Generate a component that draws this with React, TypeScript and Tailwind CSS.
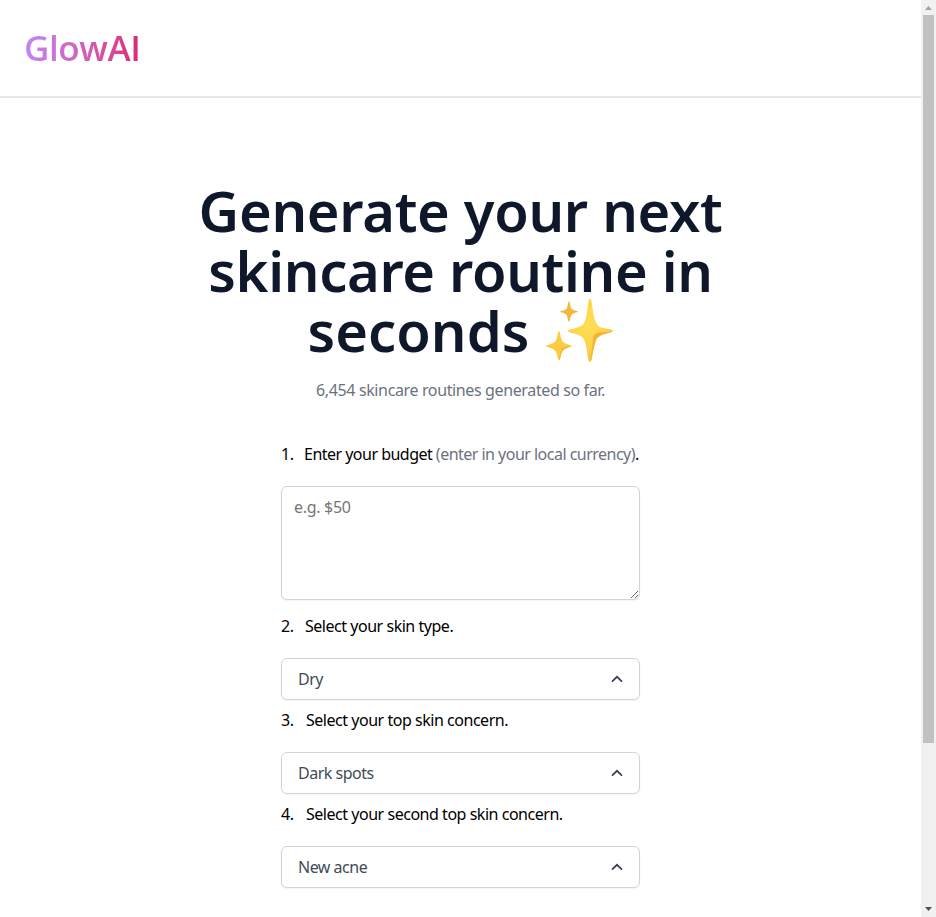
import React from "react";

function Sparkles() {
  return (
    <svg className="h-[66px] w-[68px] shrink-0" viewBox="0 0 68 66" role="img" aria-label="sparkles">
      <defs>
        <radialGradient id="big" cx="0.45" cy="0.4" r="0.6">
          <stop offset="0" stopColor="#ffdd58" />
          <stop offset="0.6" stopColor="#fdd649" />
          <stop offset="1" stopColor="#f7c43c" />
        </radialGradient>
      </defs>
      <path d="M44 1C45 1 45.6 3 46 6C47.500 20 50 26.500 53 28.500C55.500 30 60 30.500 65 31.600C67.500 32.200 67.500 33.800 65 34.400C58 35.900 53 37 50.500 40.500C48 45 47 53 45.800 61C45 65 43 65 42.200 61C41 53 40 45 37.500 40.500C35 37 30 35.900 24 34.400C21.500 33.800 21.500 32.200 24 31.600C29 30.500 34 29 37 26.500C40 23 41 15 42 6C42.400 3 43 1 44 1Z" fill="url(#big)" />
      <path d="M66 33.500C59 34.500 52 33.500 49 36C46.500 38.500 47 44 44.500 63C46 63 47.500 47 51 40.500C54 36.500 62 35.500 66 33.500Z" fill="#f4b534" />
      <path d="M13 33C14 33 14.500 39 16 42.500C17.500 45.500 21 46 25 47.200C26 47.600 26 48.400 25 48.800C20 50 17.500 51 16 54C14.500 58 14 62.500 13 62.500C12 62.500 11.500 58 10 54C8.500 51 5 50 1 48.800C0 48.400 0 47.600 1 47.200C6 46 8.500 45 10 42.500C11.500 39 12 33 13 33Z" fill="#fdca42" />
      <path d="M24 48.500C20 49 17 48.500 15.500 51C14.500 53 14 59 13 62C15 61 14.500 54 17.500 52C20 50 22 50 24 48.500Z" fill="#f4b534" />
      <path d="M23 3C23.700 3 24.200 8 25.200 10.300C26.200 12 28.500 12.300 31 13C32 13.400 32 13.900 31 14.200C28 15 26.200 15.600 25.200 17.500C24.200 20 23.700 24 23 24C22.300 24 21.800 20 20.800 17.500C19.800 15.600 18 15 15 14.200C14 13.900 14 13.400 15 13C18 12.300 19.800 12 20.800 10.300C21.800 8 22.300 3 23 3Z" fill="#f4b73b" />
    </svg>
  );
}

function Select({ value }: { value: string }) {
  return (
    <button className="mt-5 flex h-[42px] w-full items-center justify-between rounded-md border border-[#d1d5db] bg-white pl-4 pr-3.5 tracking-[-0.5px] text-[#434a56] shadow-[0_1px_2px_rgba(0,0,0,0.05)]">
      <span>{value}</span>
      <svg className="h-4 w-4" viewBox="0 0 16 16" fill="none" stroke="#374151" strokeWidth="1.7" strokeLinecap="round">
        <path d="M3.500 10.200 8 5.800 12.500 10.200" />
      </svg>
    </button>
  );
}

function Label({ n, gap, children }: { n: number; gap: string; children: React.ReactNode }) {
  return (
    <p className="flex h-6 whitespace-nowrap tracking-[-0.47px] text-black">
      <span className={`shrink-0 ${gap}`}>{n}.</span>
      <span>{children}</span>
    </p>
  );
}

function Scrollbar() {
  return (
    <div className="flex h-full w-[15px] shrink-0 flex-col items-center bg-[#f1f1f1]">
      <svg className="h-[15px] w-[15px] shrink-0" viewBox="0 0 15 15">
        <path d="M4 10 7.500 6 11 10Z" fill="#a3a3a3" />
      </svg>
      <div className="h-[728px] w-[11px] bg-[#c1c1c1]" />
      <svg className="mt-auto h-[15px] w-[15px] shrink-0" viewBox="0 0 15 15">
        <path d="M4 5 11 5 7.500 9Z" fill="#505050" />
      </svg>
    </div>
  );
}

export default function App() {
  return (
    <div className="flex h-[917px] w-[936px] overflow-hidden bg-white font-['Noto_Sans',sans-serif] text-base">
      <div className="flex min-w-0 flex-1 flex-col">
        <header className="flex h-[98px] shrink-0 items-center border-b-2 border-[#e5e7eb] px-6">
          <h2 className="bg-gradient-to-r from-[#c084fc] to-[#db2777] bg-clip-text font-['Open_Sans',sans-serif] text-[35px] leading-10 font-semibold tracking-[-0.4px] text-transparent">GlowAI</h2>
        </header>
        <main className="flex flex-col items-center pt-[82px]">
          <h1 className="flex flex-col items-center whitespace-nowrap text-[56px] leading-[60px] font-semibold tracking-[-0.3px] text-[#0f172a]">
            <span>Generate your next</span>
            <span>skincare routine in</span>
            <span className="flex h-[60px] gap-4">
              <span className="tracking-[0.1px]">seconds</span>
              <span className="-mt-0.5"><Sparkles /></span>
            </span>
          </h1>
          <p className="mt-[18px] h-6 tracking-[-0.37px] text-[#6b7280]">6,454 skincare routines generated so far.</p>
          <div className="mt-10 w-[359px]">
            <Label n={1} gap="w-[23px]">
              <span className="tracking-[-0.52px]">Enter your budget <span className="text-[#6b7280]">(enter in your local currency)</span>.</span>
            </Label>
            <textarea
              rows={4}
              className="mt-5 mb-3.5 block h-[114px] w-full rounded-md border border-[#d1d5db] bg-white px-3 py-2 tracking-[-0.3px] shadow-[0_1px_2px_rgba(0,0,0,0.05)] placeholder:text-[#757575]"
              placeholder="e.g. $50"
            />
            <Label n={2} gap="w-6">Select your skin type.</Label>
            <Select value="Dry" />
            <div className="h-2" />
            <Label n={3} gap="w-[25px]">Select your top skin concern.</Label>
            <Select value="Dark spots" />
            <div className="h-2" />
            <Label n={4} gap="w-[25px]">Select your second top skin concern.</Label>
            <Select value="New acne" />
          </div>
        </main>
      </div>
      <Scrollbar />
    </div>
  );
}
